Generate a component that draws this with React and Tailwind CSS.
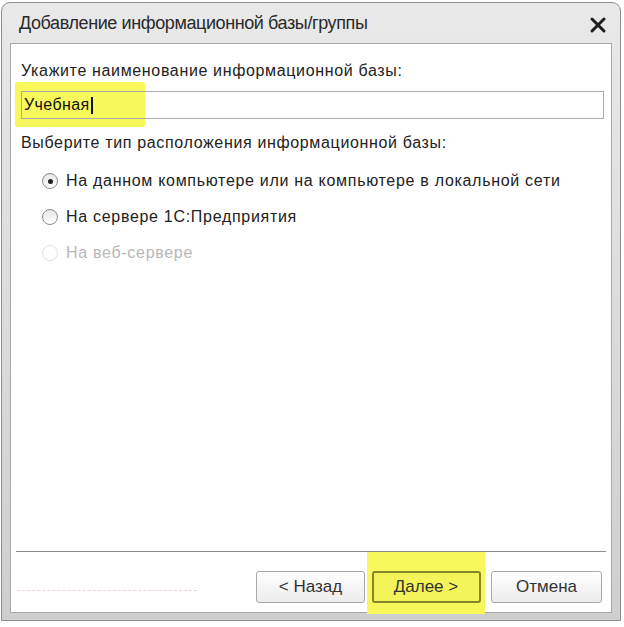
const Radio = ({ checked, disabled, label }) => (
  <div className={`flex items-center h-[36px] ${disabled ? 'text-[#b8b8b8]' : 'text-[#222]'}`}>
    <span
      className={`w-[16px] h-[16px] rounded-full border flex items-center justify-center mr-[8px] shrink-0 ${
        disabled ? 'border-[#e0e0e0] bg-white' : 'border-[#8c8c8c] bg-gradient-to-b from-[#e6e6e6] to-white'
      }`}
    >
      {checked && <span className="w-[5px] h-[5px] rounded-full bg-[#222]" />}
    </span>
    <span>{label}</span>
  </div>
);

const Button = ({ children, active, width }) => (
  <div
    className={`h-[32px] rounded-[3px] flex items-center justify-center text-[17px] ${width} ${
      active
        ? 'border-2 border-[#85852a] bg-[#f4f45a] text-[#333]'
        : 'border border-[#a8a8a8] bg-gradient-to-b from-white to-[#ececec] text-[#333]'
    }`}
  >
    {children}
  </div>
);

export default function App() {
  return (
    <div className="w-[624px] h-[627px] bg-white pt-[2px] pl-[1px]" style={{ fontFamily: '"Liberation Sans", Arial, sans-serif' }}>
      <div className="w-[620px] h-[619px] rounded-t-[9px] border border-[#8e8e8e] bg-gradient-to-b from-[#e9e9e9] to-[#cfcfcf] flex flex-col px-[8px] pb-[7px]">
        {/* title bar */}
        <div className="h-[40px] flex items-center justify-between pl-[9px] pr-[5px] shrink-0">
          <span className="text-[18px] text-[#2a2a2a] tracking-[-0.4px]">Добавление информационной базы/группы</span>
          <svg width="18" height="18" viewBox="0 0 18 18" className="mt-[3px]">
            <path d="M3 3 L15 15 M15 3 L3 15" stroke="#1e1e1e" strokeWidth="3" strokeLinecap="round" />
          </svg>
        </div>

        {/* client area */}
        <div className="flex-1 bg-white border border-[#a8a8a8] flex flex-col text-[16px] tracking-[0.65px] text-[#222] relative">
          <div className="px-[10px] pt-[15px]">
            <div>Укажите наименование информационной базы:</div>
            <div className="relative mt-[8px] h-[28px]">
              <div className="absolute -left-[6px] -top-[9px] w-[130px] h-[45px] bg-[#f8f85c] rounded-[2px]" />
              <div className="relative h-[28px] border border-[#aaaaaa] flex items-center pl-[2px] w-[583px]">
                <span className="text-[#111] tracking-[0.4px]">Учебная</span>
                <span className="w-[2px] h-[17px] bg-[#111] ml-[1px]" />
              </div>
            </div>
            <div className="mt-[12px]">Выберите тип расположения информационной базы:</div>
            <div className="pl-[21px] mt-[8px] tracking-[0.7px]">
              <Radio checked label="На данном компьютере или на компьютере в локальной сети" />
              <Radio label="На сервере 1С:Предприятия" />
              <Radio disabled label="На веб-сервере" />
            </div>
          </div>

          <div className="flex-1" />

          <div className="mx-[5px] border-t border-[#8c8c8c]" />
          <div className="h-[60px] flex items-start justify-end pr-[9px] relative tracking-normal">
            <div className="absolute left-[6px] top-[38px] w-[180px] border-t border-dashed border-[#f0d4d4]" />
            <div className="flex items-start pt-[19px]">
              <Button width="w-[109px]">&lt; Назад</Button>
              <div className="bg-[#f8f85c] w-[118px] h-[62px] -mt-[19px] ml-[2px] mr-[6px] flex justify-center pt-[19px]">
                <Button active width="w-[109px]">Далее &gt;</Button>
              </div>
              <Button width="w-[111px]">Отмена</Button>
            </div>
          </div>
        </div>
      </div>
    </div>
  );
}
